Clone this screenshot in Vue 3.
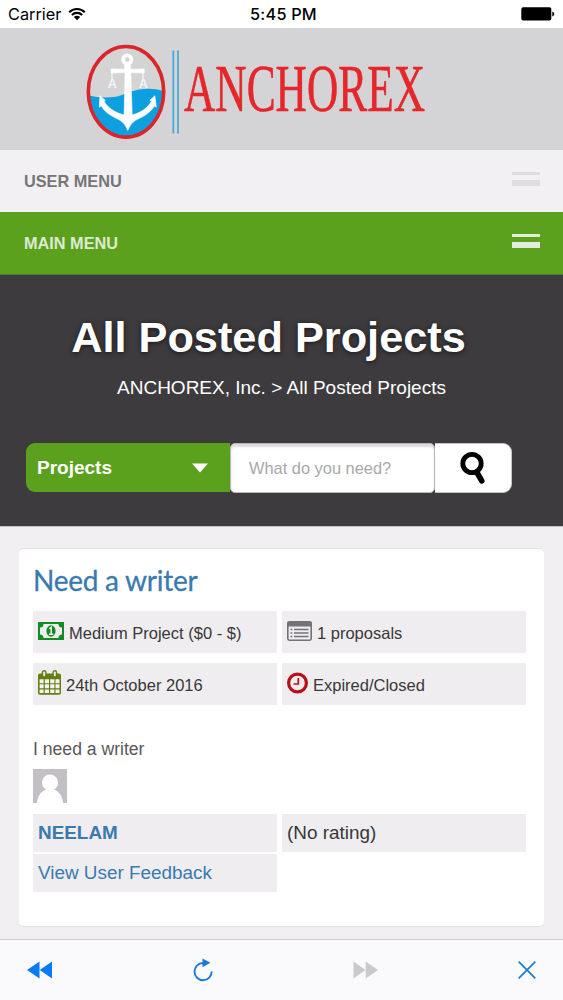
<template>
    <div class="phone">
        <div class="status">
            <div class="carrier">
                <span>Carrier</span>
                <svg width="18" height="14" viewBox="0 0 18 14">
                    <path d="M1.2 5.2a11 11 0 0 1 15.6 0M3.9 8a7.2 7.2 0 0 1 10.2 0" fill="none" stroke="#000" stroke-width="2.1" />
                    <path d="M5.8 10.1a4.5 4.5 0 0 1 6.4 0L9 13.3z" />
                </svg>
            </div>
            <div class="clock">5:45 PM</div>
            <div class="battery">
                <svg width="34" height="14" viewBox="0 0 34 14">
                    <rect x=".3" y=".3" width="30" height="13.2" rx="1.8" />
                    <path d="M31.3 4.5q2 .8 2 2.5t-2 2.5z" />
                </svg>
            </div>
        </div>

        <header class="brand">
            <svg width="563" height="122" viewBox="0 28 563 122">
                <!-- anchor emblem -->
                <ellipse cx="126" cy="91.8" rx="37.6" ry="45.2" fill="#d4d4d5" />
                <path d="M89 95.5C99 98 112 98.5 122 95C133 90 148 86 163.3 91C164 119 147 137 126 137C105 137 90 121 89 95.5Z" fill="#0d9fdf" />
                <ellipse cx="126" cy="91.8" rx="37.7" ry="45.3" fill="none" stroke="#dc252a" stroke-width="3.6" />
                <g fill="#fff">
                    <circle cx="127.3" cy="59.5" r="4.2" fill="none" stroke="#fff" stroke-width="3.8" />
                    <path d="M124.2 65h6.6l-.5 4.3 14-.4v4.2l-13.5-.6 1.4 42.5c5-1.5 14-4.5 19.5-14l-1.8-.7 5-4.6 1.4 11.500-2-1.200c-5 8.600-14 11.500-19 14.500-4 2.600-5.500 5.500-7.500 10-2-4.500-3.500-7.400-7.500-10-5-3-14-5.900-19-14.500l-2 1.200.6-11.500 5.500 4.800-1.600.5c5.500 9.500 15.200 12.500 20.300 14l1-42.500-14 .6v-4.200l14 .4z" stroke="#fff" stroke-width=".6" />
                    <path d="M112 73v6M143 73v6" stroke="#fff" stroke-width="1" />
                </g>
                <text class="tag" x="107.800" y="88">A</text>
                <text class="tag" x="138.800" y="88">A</text>
                <path d="M173.300 50.500v83M178 50.500v83" stroke="#45a9d7" stroke-width="1.7" />
                <text class="name" transform="translate(184 110.5) scale(1 1.98)" textLength="241" lengthAdjust="spacingAndGlyphs">ANCHOREX</text>
            </svg>
        </header>

        <nav class="menu user">
            <span>USER MENU</span>
            <i class="bars"></i>
        </nav>
        <nav class="menu main">
            <span>MAIN MENU</span>
            <i class="bars"></i>
        </nav>

        <section class="hero">
            <h1>All Posted Projects</h1>
            <p>ANCHOREX, Inc. &gt; All Posted Projects</p>
            <form class="search" @submit.prevent>
                <div class="kind">
                    <span>Projects</span>
                    <svg width="16" height="10" viewBox="0 0 16 10"><path d="M0 .5h16L8 9.5z" fill="#fff" /></svg>
                </div>
                <input v-model="keyword" type="text" placeholder="What do you need?">
                <button type="submit">
                    <svg width="28" height="34" viewBox="0 0 28 34" fill="none" stroke="#000">
                        <circle cx="13" cy="12.5" r="9.2" stroke-width="4.8" />
                        <path d="M18 21.5l4.8 8.3" stroke-width="5.6" stroke-linecap="round" />
                    </svg>
                </button>
            </form>
        </section>

        <main class="content">
            <article class="card">
                <h2>Need a writer</h2>
                <div class="facts">
                    <div class="fact">
                        <svg width="26" height="18" viewBox="0 0 26 18">
                            <path d="M0 0h26v18H0z" fill="#118b22" />
                            <path d="M5.5 2h15a3.5 3.5 0 0 0 3.5 3.5v7a3.5 3.5 0 0 0-3.5 3.5h-15A3.5 3.5 0 0 0 2 12.5v-7A3.5 3.5 0 0 0 5.5 2z" fill="#efedef" />
                            <ellipse cx="13" cy="9" rx="4.6" ry="5.8" fill="#118b22" />
                            <path d="M11.2 6.8l2-1.6v7M11 12.3h4.3" fill="none" stroke="#efedef" stroke-width="1.5" />
                        </svg>
                        <span>Medium Project ($0 - $)</span>
                    </div>
                    <div class="fact">
                        <svg width="25" height="20" viewBox="0 0 25 20">
                            <rect x=".8" y=".8" width="23.4" height="18.4" rx="1.6" fill="none" stroke="#747278" stroke-width="1.6" />
                            <path d="M.5 1h24v4.5H.5z" fill="#747278" />
                            <path d="M3.5 8.5h1.8M3.5 12h1.8M3.5 15.5h1.8M7 8.5h14.5M7 12h14.5M7 15.5h14.5" stroke="#747278" stroke-width="1.5" />
                        </svg>
                        <span>1 proposals</span>
                    </div>
                    <div class="fact">
                        <svg width="23" height="25" viewBox="0 0 23 25">
                            <path d="M2 3.5h19a2 2 0 0 1 2 2v17.3a2 2 0 0 1-2 2H2a2 2 0 0 1-2-2V5.5a2 2 0 0 1 2-2z" fill="#647e13" />
                            <path d="M1.6 9.2h4v4h-4zM6.8 9.2h4.2v4H6.8zM12.2 9.2h4.2v4h-4.2zM17.5 9.2h4v4h-4zM1.6 14.3h4v4h-4zM6.8 14.3h4.2v4H6.8zM12.2 14.3h4.2v4h-4.2zM17.5 14.3h4v4h-4zM1.6 19.4h4v3.7h-4zM6.8 19.4h4.2v3.7H6.8zM12.2 19.4h4.2v3.7h-4.2zM17.5 19.4h4v3.7h-4z" fill="#f4f3f1" />
                            <rect x="4.5" y=".7" width="3.4" height="6.2" rx="1.6" fill="#efedef" stroke="#647e13" stroke-width="1.4" />
                            <rect x="15.1" y=".7" width="3.4" height="6.2" rx="1.6" fill="#efedef" stroke="#647e13" stroke-width="1.4" />
                        </svg>
                        <span>24th October 2016</span>
                    </div>
                    <div class="fact">
                        <svg width="21" height="22" viewBox="0 0 21 22" fill="none" stroke="#b80f19">
                            <circle cx="10.5" cy="11" r="8.9" stroke-width="3.2" />
                            <path d="M11.3 6v6H6.5" stroke-width="1.7" />
                        </svg>
                        <span>Expired/Closed</span>
                    </div>
                </div>
                <p class="summary">I need a writer</p>
                <svg width="34" height="34" viewBox="0 0 34 34">
                    <path d="M0 0h34v34H0z" fill="#c2c0c4" />
                    <path d="M4 34c.5-7 4-11.5 9-13.5A8 8 0 0 1 9 13.500a8 8 0 0 1 16 0 8 8 0 0 1-4 7c5 2 8.5 6.5 9 13.5z" fill="#fff" />
                </svg>
                <div class="owner">
                    <a href="#"><b>NEELAM</b></a>
                    <span>(No rating)</span>
                    <a href="#">View User Feedback</a>
                </div>
            </article>
        </main>

        <footer class="toolbar">
            <svg width="26" height="18" viewBox="0 0 26 18" fill="#087cf8"><path d="M12.5 .5v17L0 9zM25 .5v17L12.7 9z" /></svg>
            <svg width="22" height="24" viewBox="0 0 22 24">
                <path d="M11 5a8.6 8.6 0 1 0 8.7 8.500" fill="none" stroke="#197bd8" stroke-width="1.9" />
                <path d="M10.5 .5l8 4.2-8 4.600z" fill="#197bd8" />
            </svg>
            <svg width="26" height="18" viewBox="0 0 26 18" fill="#cac9cc"><path d="M.5 .5v17L12.5 9zM12.7 .5v17L25 9z" /></svg>
            <svg width="18" height="18" viewBox="0 0 18 18"><path d="M.7 .7l16.6 16.6M17.3 .7L.7 17.3" stroke="#197bd8" stroke-width="1.7" /></svg>
        </footer>
    </div>
</template>

<script setup>
import { ref } from 'vue';

const keyword = ref('');
</script>

<style>
body {
    margin: 0;
    overflow: hidden;
}
</style>

<style scoped>
* {
    box-sizing: border-box;
}

svg {
    display: block;
    flex: none;
}

.phone {
    display: flex;
    flex-direction: column;
    width: 563px;
    height: 1000px;
    background: #f1eff2;
    color: #39373a;
    font-family: "Liberation Sans", Arial, sans-serif;
}

.status {
    display: grid;
    grid-template-columns: 1fr auto 1fr;
    align-items: center;
    flex: none;
    height: 28px;
    padding: 0 8px;
    background: #fff;
    color: #000;
    font: 16.3px/28px Inter, sans-serif;
}

.carrier {
    display: flex;
    align-items: center;
    gap: 7px;
}

.clock {
    padding-left: 4px;
    font-weight: 500;
    letter-spacing: .2px;
}

.battery {
    justify-self: end;
}

.brand {
    flex: none;
    height: 122px;
    background: #d4d3d5;
}

.brand .name {
    font: 34px "Liberation Serif", serif;
    fill: #e5262a;
    stroke: #e5262a;
    stroke-width: .3px;
}

.brand .tag {
    font: bold 12.5px "Liberation Sans", sans-serif;
    fill: #f5f4f5;
}

.menu {
    display: flex;
    align-items: center;
    justify-content: space-between;
    flex: none;
    height: 62px;
    padding: 0 23px 0 24px;
    font-size: 16.3px;
    font-weight: bold;
}

.user {
    color: #777579;
    background: #f2f0f3;
}

.main {
    height: 63px;
    color: #dcead0;
    background: #5ca11e;
    border-bottom: 1px solid #51763a;
}

.bars {
    width: 28px;
    height: 14px;
    margin-top: -5px;
    border-top: 3px solid #dfdde0;
    border-bottom: 6px solid #dfdde0;
}

.main .bars {
    border-color: #e3eddb;
}

.hero {
    flex: none;
    height: 251px;
    padding-top: 37px;
    background: #3e3b3e;
    color: #fff;
    text-align: center;
}

h1 {
    margin: 0;
    padding-right: 26px;
    font-size: 43.3px;
    line-height: 50px;
    text-shadow: 0 1px 5px #171517;
}

.hero p {
    margin: 14px 0 0;
    font-size: 19px;
    line-height: 24px;
}

.search {
    display: flex;
    width: 486px;
    height: 50px;
    margin: 43px 0 0 26px;
}

.kind {
    display: flex;
    align-items: center;
    justify-content: space-between;
    width: 204px;
    height: 49px;
    padding: 0 22px 0 11px;
    border-radius: 9px 0 0 9px;
    background: #5ca11e;
    font-size: 19px;
    font-weight: bold;
}

.search input {
    width: 205px;
    height: 50px;
    padding: 0 17px 0 18px;
    border: 1px solid #b8b6b9;
    border-radius: 5px;
    background: #fff;
    box-shadow: inset 0 3px 2px #dddbdd;
    font: 16.4px "Liberation Sans", sans-serif;
}

.search input::placeholder {
    color: #a9a8aa;
    opacity: 1;
}

.search button {
    display: flex;
    align-items: center;
    justify-content: center;
    width: 77px;
    height: 50px;
    padding: 0;
    border: 1px solid #c5c3c6;
    border-left: 0;
    border-radius: 0 9px 9px 0;
    background: #fff;
}

.content {
    flex: 1;
    padding: 21px 19px 0;
    border-top: 1px solid #c7c5c8;
}

.card {
    height: 379px;
    padding: 13px 18px 0 14px;
    border: 1px solid #e2e0e3;
    border-left: 0;
    border-right: 0;
    border-radius: 5px;
    background: #fff;
}

h2 {
    margin: 0 0 13px;
    color: #397aaf;
    font: 28px/36px Lato, sans-serif;
    letter-spacing: -.25px;
    -webkit-text-stroke: .3px #397aaf;
}

.facts {
    display: grid;
    grid-template-columns: 244px 244px;
    gap: 10px 5px;
}

.fact {
    display: flex;
    align-items: center;
    gap: 5px;
    height: 42px;
    padding: 2px 5px 0;
    background: #efedef;
    font-size: 16.5px;
}

.fact svg {
    margin-top: -5px;
}

.summary {
    margin: 35px 0 10px;
    color: #59575b;
    font-size: 17.6px;
    line-height: 19px;
}

.owner {
    display: grid;
    grid-template-columns: 244px 244px;
    gap: 2px 5px;
    margin-top: 11px;
}

.owner > * {
    height: 38px;
    padding-left: 5px;
    background: #efedef;
    font-size: 18.9px;
    line-height: 38px;
}

.owner a {
    color: #397aaf;
    text-decoration: none;
}

.toolbar {
    display: flex;
    align-items: center;
    justify-content: space-between;
    flex: none;
    height: 61px;
    padding: 0 27px;
    border-top: 1px solid #cfcdd0;
    background: #faf9fc;
}
</style>
